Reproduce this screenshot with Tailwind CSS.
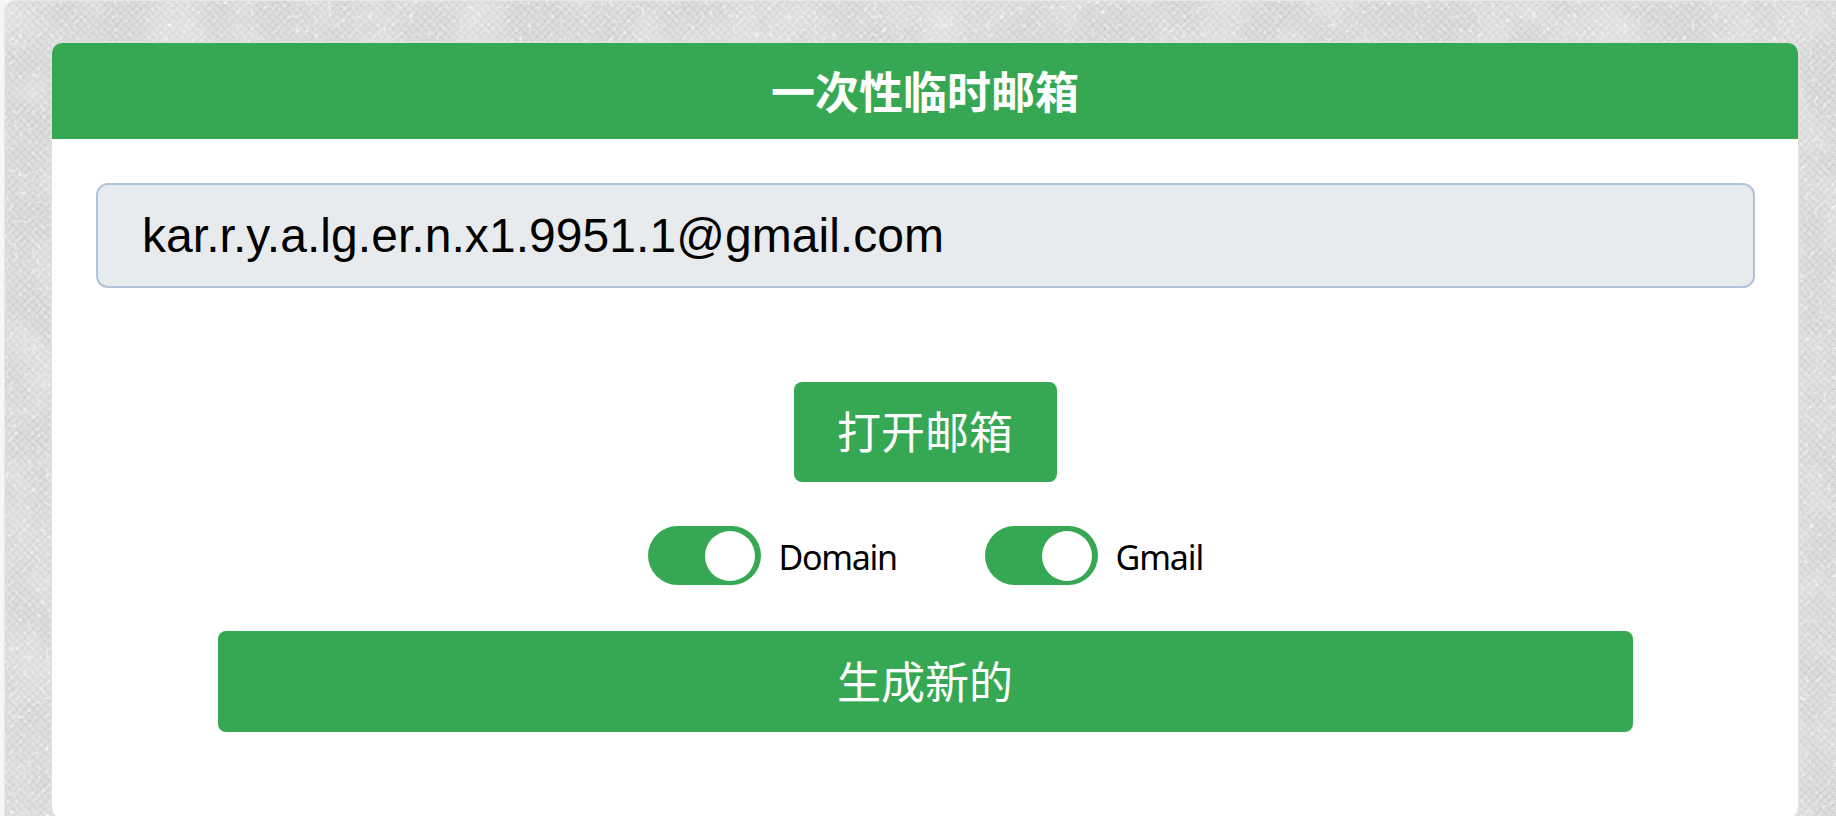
<!DOCTYPE html>
<html lang="zh-CN">
<head>
  <meta charset="UTF-8" />
  <meta name="viewport" content="width=device-width, initial-scale=1.0" />
  <title>一次性临时邮箱</title>
  <script src="https://cdn.jsdelivr.net/npm/@tailwindcss/browser@4"></script>
</head>
<body class="h-screen overflow-hidden bg-[#f6f6f6] pl-1 font-['Noto_Sans','Noto_Sans_CJK_SC',sans-serif] text-black">
  <div class="relative isolate h-screen overflow-hidden rounded-tl-xl border-t border-l border-[#e8e8e8] bg-[#d9d9d9] pt-10 pr-9 pl-[45px]">
    <!-- woven paper texture -->
    <svg class="absolute inset-0 -z-10 h-full w-full" aria-hidden="true">
      <defs>
        <pattern id="weave" width="8" height="8" patternUnits="userSpaceOnUse">
          <path d="M0 0L8 8M8 0L0 8" stroke="#c6c6c6" stroke-width="1" opacity=".65" />
          <path d="M4 0L8 4L4 8L0 4Z" fill="none" stroke="#e9e9e9" stroke-width="1" opacity=".4" />
        </pattern>
        <filter id="mottle" x="0" y="0" width="100%" height="100%">
          <feTurbulence type="fractalNoise" baseFrequency=".02" numOctaves="3" seed="4" />
          <feColorMatrix values="0 0 0 0 1  0 0 0 0 1  0 0 0 0 1  .6 0 0 0 -.2" />
        </filter>
        <filter id="flecks" x="0" y="0" width="100%" height="100%">
          <feTurbulence type="fractalNoise" baseFrequency=".22" numOctaves="2" seed="9" />
          <feColorMatrix values="0 0 0 0 1  0 0 0 0 1  0 0 0 0 1  2.4 0 0 0 -1.4" />
        </filter>
      </defs>
      <rect width="100%" height="100%" fill="url(#weave)" />
      <rect width="100%" height="100%" filter="url(#mottle)" />
      <rect width="100%" height="100%" filter="url(#flecks)" />
    </svg>

    <div class="h-[779px] rounded-xl border-2 border-[#dfdfdf] bg-white bg-clip-padding">
      <h1 class="flex h-24 items-center justify-center rounded-t-[10px] bg-[#36a854] pb-0.5 font-['Noto_Sans_CJK_SC',sans-serif] text-[44px] font-bold text-white">一次性临时邮箱</h1>

      <div class="flex flex-col items-center pt-11 pr-[43px] pl-11">
        <input type="text" readonly value="kar.r.y.a.lg.er.n.x1.9951.1@gmail.com" class="h-[105px] w-full rounded-xl border-2 border-[#b0c4d9] bg-[#e8ebee] px-11 font-['Liberation_Sans',sans-serif] text-[48px] tracking-[0.05px] text-black" />

        <button class="mt-[94px] mr-px h-[100px] w-[263px] rounded-lg bg-[#36a854] pb-1 font-['Noto_Sans_CJK_SC',sans-serif] text-[44px] text-white">打开邮箱</button>

        <div class="mt-11 mr-0.5 flex h-[59px] gap-[89px]">
          <label class="flex w-[248px] items-center gap-[18px]">
            <span class="flex h-[59px] w-[113px] shrink-0 items-center justify-end rounded-full bg-[#36a854] pr-1.5">
              <span class="size-[50px] rounded-full bg-white"></span>
            </span>
            <span class="pt-1 text-[34px] tracking-[-1.3px]">Domain</span>
          </label>
          <label class="flex w-[217px] items-center gap-[18px]">
            <span class="flex h-[59px] w-[113px] shrink-0 items-center justify-end rounded-full bg-[#36a854] pr-1.5">
              <span class="size-[50px] rounded-full bg-white"></span>
            </span>
            <span class="pt-1 text-[34px] tracking-[-1.1px]">Gmail</span>
          </label>
        </div>

        <button class="mt-[46px] mr-px h-[101px] w-[1415px] rounded-lg bg-[#36a854] pb-[3px] font-['Noto_Sans_CJK_SC',sans-serif] text-[44px] text-white">生成新的</button>
      </div>
    </div>
  </div>
</body>
</html>
